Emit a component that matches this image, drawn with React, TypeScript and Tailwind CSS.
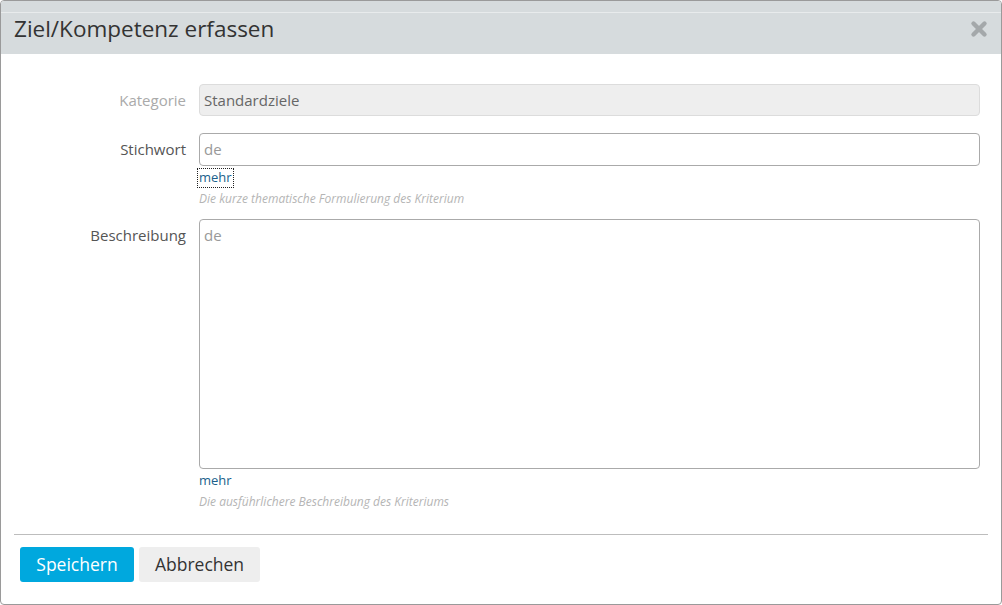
import { X } from "lucide-react";

export default function App() {
  return (
    <div className="w-[1002px] h-[605px] bg-white font-['Open_Sans',sans-serif] text-[#333]">
      <div className="w-full h-full border border-[#9a9a9a] rounded-[4px] overflow-hidden flex flex-col">
        {/* Header */}
        <div className="h-[53px] bg-[#d6dbdd] flex flex-col shrink-0">
          <div className="h-[11px]" />
          <div className="flex-1 border-t border-[#e8ebec] flex items-center justify-between pl-[13px] pr-[12px]">
            <h1 className="text-[22.5px] leading-none text-[#333] -mt-[9px]">Ziel/Kompetenz erfassen</h1>
            <X className="w-[22px] h-[22px] text-[#a4a8aa] -mt-[10px] -mr-[1px]" strokeWidth={4.8} />
          </div>
        </div>

        {/* Form */}
        <div className="flex flex-col pt-[30px] text-[15px]">
          <div className="flex items-center h-[32px]">
            <label className="w-[185px] text-right text-[#aaa]">Kategorie</label>
            <div className="ml-[13px] w-[781px] h-[32px] rounded-[4px] border border-[#dcdcdc] bg-[#eee] flex items-center px-[4px] text-[#666]">
              Standardziele
            </div>
          </div>

          <div className="flex mt-[17px]">
            <label className="w-[185px] text-right pt-[5px] text-[#555]">Stichwort</label>
            <div className="ml-[13px] w-[781px] flex flex-col">
              <div className="h-[33px] rounded-[4px] border border-[#aaa] flex items-center px-[4px] text-[#999]">de</div>
              <div className="mt-[3px] h-[18px] flex">
                <span className="text-[13px] leading-[16px] text-[#1b5f8c] outline outline-1 outline-dotted outline-[#222] px-[1px] -ml-[1px]">mehr</span>
              </div>
              <div className="mt-[3px] text-[12px] italic text-[#b5b5b5]">Die kurze thematische Formulierung des Kriterium</div>
            </div>
          </div>

          <div className="flex mt-[11px]">
            <label className="w-[185px] text-right pt-[5px] text-[#555]">Beschreibung</label>
            <div className="ml-[13px] w-[781px] flex flex-col">
              <div className="h-[250px] rounded-[4px] border border-[#aaa] px-[4px] pt-[4px] text-[#999]">de</div>
              <div className="mt-[1px] text-[13px] leading-[20px] text-[#1b5f8c]">mehr</div>
              <div className="mt-[3px] text-[12px] italic text-[#b5b5b5]">Die ausführlichere Beschreibung des Kriteriums</div>
            </div>
          </div>

          <div className="mx-[13px] mt-[23px] border-t border-[#bdbdbd]" />

          <div className="flex gap-[5px] pl-[19px] pt-[12px]">
            <button className="w-[114px] h-[35px] rounded-[3px] bg-[#00a8de] text-white text-[17.5px]">Speichern</button>
            <button className="w-[121px] h-[35px] rounded-[3px] bg-[#eee] text-[#333] text-[17.5px]">Abbrechen</button>
          </div>
        </div>
      </div>
    </div>
  );
}
